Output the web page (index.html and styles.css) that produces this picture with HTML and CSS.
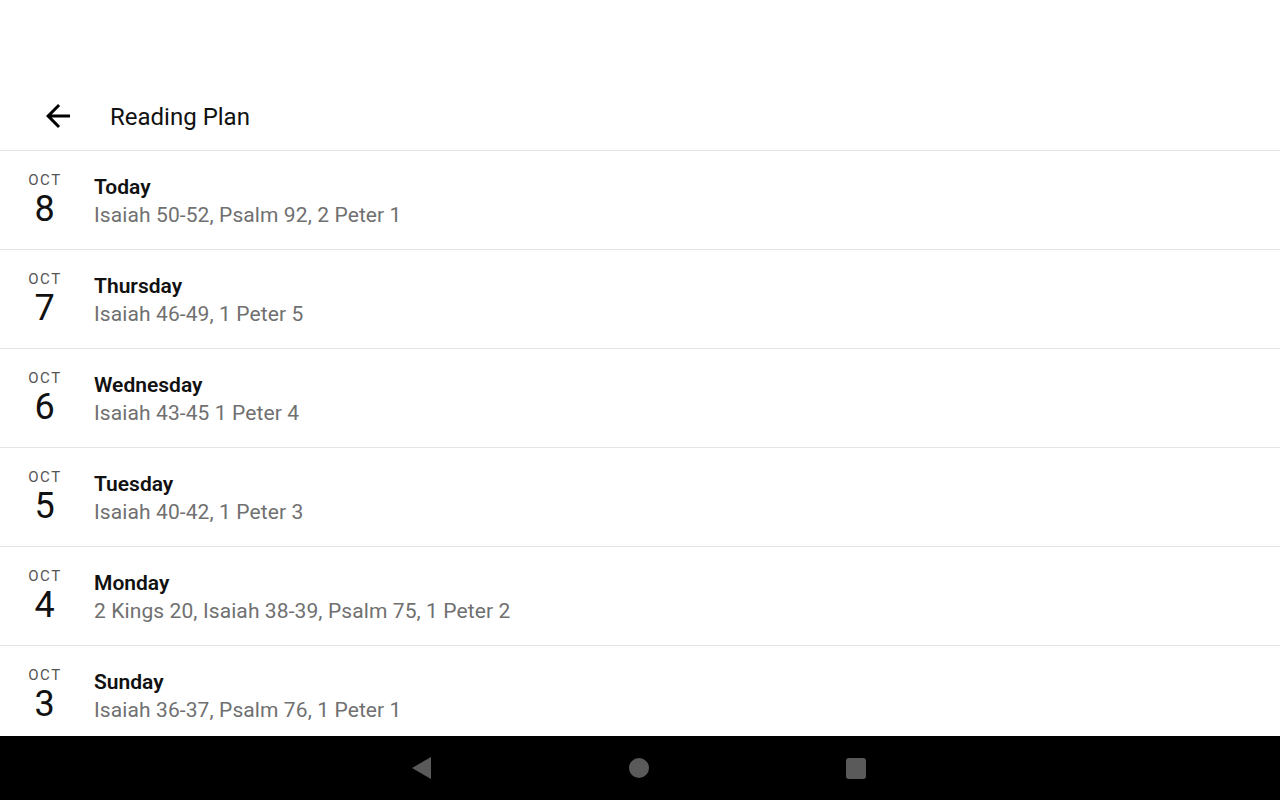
FILE: index.html
```html
<!DOCTYPE html>
<html lang="en">
<head>
    <meta charset="UTF-8">
    <meta name="viewport" content="width=device-width, initial-scale=1.0">
    <title>Reading Plan</title>
    <link rel="stylesheet" href="styles.css">
</head>
<body>
    <div class="screen">
        <div class="status-bar"></div>
        <header class="toolbar">
            <button class="back-btn" aria-label="Back">
                <svg width="36" height="36" viewBox="0 0 24 24">
                    <path d="M20 11H7.83l5.59-5.59L12 4l-8 8 8 8 1.41-1.41L7.83 13H20v-2z" fill="#000"/>
                </svg>
            </button>
            <h1 class="title">Reading Plan</h1>
        </header>
        <!-- list of readings, newest first -->
        <ul class="plan-list">
            <li class="plan-item">
                <div class="date"><span class="month">OCT</span><span class="day">8</span></div>
                <div class="info"><div class="label">Today</div><div class="passages">Isaiah 50-52, Psalm 92, 2 Peter 1</div></div>
            </li>
            <li class="plan-item">
                <div class="date"><span class="month">OCT</span><span class="day">7</span></div>
                <div class="info"><div class="label">Thursday</div><div class="passages">Isaiah 46-49, 1 Peter 5</div></div>
            </li>
            <li class="plan-item">
                <div class="date"><span class="month">OCT</span><span class="day">6</span></div>
                <div class="info"><div class="label">Wednesday</div><div class="passages">Isaiah 43-45 1 Peter 4</div></div>
            </li>
            <li class="plan-item">
                <div class="date"><span class="month">OCT</span><span class="day">5</span></div>
                <div class="info"><div class="label">Tuesday</div><div class="passages">Isaiah 40-42, 1 Peter 3</div></div>
            </li>
            <li class="plan-item">
                <div class="date"><span class="month">OCT</span><span class="day">4</span></div>
                <div class="info"><div class="label">Monday</div><div class="passages">2 Kings 20, Isaiah 38-39, Psalm 75, 1 Peter 2</div></div>
            </li>
            <li class="plan-item">
                <div class="date"><span class="month">OCT</span><span class="day">3</span></div>
                <div class="info"><div class="label">Sunday</div><div class="passages">Isaiah 36-37, Psalm 76, 1 Peter 1</div></div>
            </li>
        </ul>
        <nav class="nav-bar">
            <svg width="22" height="24" viewBox="0 0 22 24"><path d="M21 1 L2 12 L21 23 Z" fill="#5a5a5a"/></svg>
            <span class="nav-home"></span>
            <span class="nav-recent"></span>
        </nav>
    </div>
</body>
</html>
```

FILE: styles.css
```css
* {
    margin: 0;
    padding: 0;
    box-sizing: border-box;
}
body {
    font-family: Roboto, 'Noto Sans', sans-serif;
    background: #ffffff;
    color: #000;
}
.screen {
    width: 1280px;
    height: 800px;
    display: flex;
    flex-direction: column;
    overflow: hidden;
}
.status-bar {
    height: 84px;
    flex-shrink: 0;
}
.toolbar {
    height: 67px;
    flex-shrink: 0;
    display: flex;
    align-items: center;
    border-bottom: 1px solid #e4e4e4;
    padding-left: 40px;
}
.back-btn {
    background: none;
    border: none;
    width: 36px;
    height: 36px;
    display: flex;
    margin-right: 34px;
    margin-top: -2px;
}
.title {
    font-size: 24px;
    font-weight: 400;
    color: #111;
    margin-top: 0;
}
.plan-list {
    list-style: none;
    flex: 1;
    overflow: hidden;
}
.plan-item {
    height: 99px;
    display: flex;
    align-items: center;
    border-bottom: 1px solid #e4e4e4;
}
.date {
    width: 89px;
    display: flex;
    flex-direction: column;
    align-items: center;
    margin-top: -1px;
}
.month {
    font-size: 15px;
    line-height: 18px;
    letter-spacing: 1.6px;
    color: #555;
    padding-left: 1px;
}
.day {
    font-size: 36px;
    line-height: 40px;
    color: #111;
}
.info {
    padding-left: 5px;
    margin-top: 1px;
}
.label {
    font-size: 21px;
    font-weight: 600;
    line-height: 28px;
    color: #111;
}
.passages {
    font-size: 21px;
    line-height: 28px;
    letter-spacing: 0.1px;
    color: #707070;
}
.nav-bar {
    height: 64px;
    flex-shrink: 0;
    background: #000;
    display: flex;
    align-items: center;
    justify-content: center;
    gap: 197px;
    padding-right: 4px;
}
.nav-home {
    width: 20px;
    height: 20px;
    border-radius: 50%;
    background: #5a5a5a;
}
.nav-recent {
    width: 20px;
    height: 21px;
    border-radius: 3px;
    background: #5a5a5a;
}
```
